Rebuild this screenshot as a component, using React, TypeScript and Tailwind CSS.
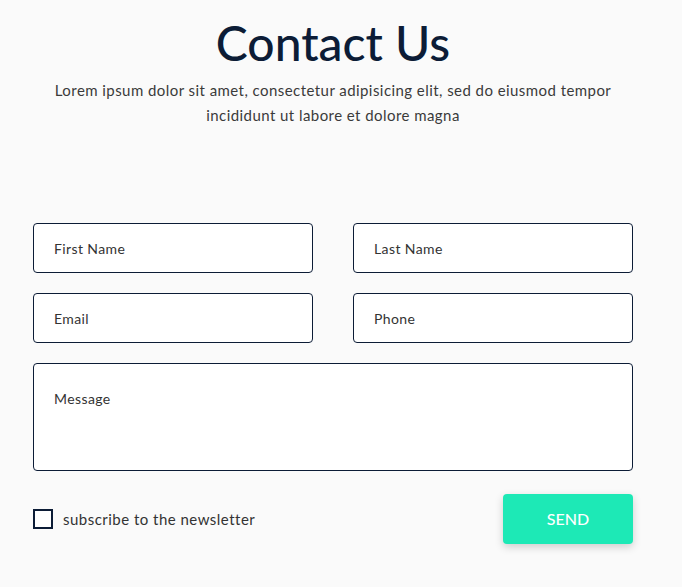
export default function App() {
  return (
    <div className="min-h-[587px] bg-[#fafafa] font-['Lato',sans-serif] text-[#333]">
      <div className="ml-[33px] w-[600px] pt-[14px]">
        <h1 className="text-center text-[48px] font-medium leading-[58px] text-[#0c1c36]">
          Contact Us
        </h1>
        <p className="mx-auto mt-[6px] w-[590px] text-center text-[15px] leading-[25px] tracking-[0.44px] text-[#3a3a3a]">
          Lorem ipsum dolor sit amet, consectetur adipisicing elit, sed do eiusmod tempor incididunt ut labore et dolore magna
        </p>

        <form className="mt-[95px] flex flex-col gap-5 tracking-[0.4px]" onSubmit={(e) => e.preventDefault()}>
          <div className="grid grid-cols-2 gap-10">
            <input
              type="text"
              placeholder="First Name"
              className="h-[50px] rounded border border-[#0c1c36] bg-white px-5 text-sm text-[#333] outline-none placeholder:text-[#333]"
            />
            <input
              type="text"
              placeholder="Last Name"
              className="h-[50px] rounded border border-[#0c1c36] bg-white px-5 text-sm text-[#333] outline-none placeholder:text-[#333]"
            />
          </div>
          <div className="grid grid-cols-2 gap-10">
            <input
              type="email"
              placeholder="Email"
              className="h-[50px] rounded border border-[#0c1c36] bg-white px-5 text-sm text-[#333] outline-none placeholder:text-[#333]"
            />
            <input
              type="tel"
              placeholder="Phone"
              className="h-[50px] rounded border border-[#0c1c36] bg-white px-5 text-sm text-[#333] outline-none placeholder:text-[#333]"
            />
          </div>
          <textarea
            placeholder="Message"
            className="h-[108px] resize-none rounded border border-[#0c1c36] bg-white px-5 pt-[25px] text-sm leading-5 text-[#333] outline-none placeholder:text-[#333]"
          />
          <div className="mt-[3px] flex items-center justify-between">
            <label className="flex items-center gap-[10px] text-[15px] tracking-[0.48px] text-[#333]">
              <input
                type="checkbox"
                className="size-5 appearance-none border-2 border-[#0c1c36] bg-white"
              />
              subscribe to the newsletter
            </label>
            <button
              type="submit"
              className="h-[50px] w-[130px] rounded bg-[#1de9b6] text-base font-medium tracking-normal text-white shadow-[0_3px_8px_rgba(0,0,0,0.18)]"
            >
              SEND
            </button>
          </div>
        </form>
      </div>
    </div>
  );
}
